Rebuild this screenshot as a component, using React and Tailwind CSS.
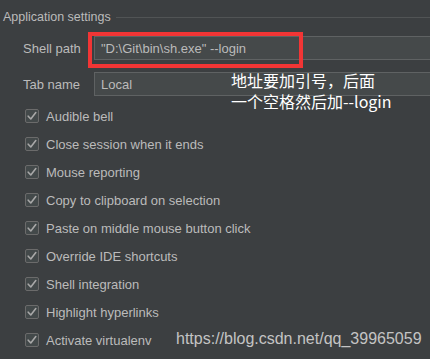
import React from 'react';

const options = [
  'Audible bell',
  'Close session when it ends',
  'Mouse reporting',
  'Copy to clipboard on selection',
  'Paste on middle mouse button click',
  'Override IDE shortcuts',
  'Shell integration',
  'Highlight hyperlinks',
  'Activate virtualenv',
];

function CheckBox() {
  return (
    <span className="flex items-center justify-center w-[14px] h-[14px] border border-[#6b6b6b] bg-[#43494a] rounded-[2px] shrink-0">
      <svg width="12" height="12" viewBox="0 0 12 12" fill="none">
        <path d="M2.2 6.2 L4.8 9 L9.8 2.6" stroke="#a8a8a8" strokeWidth="1.6" strokeLinecap="round" strokeLinejoin="round" />
      </svg>
    </span>
  );
}

function Field({ label, value }) {
  return (
    <div className="flex items-center h-[24px] pl-[23px]">
      <span className="w-[71px] shrink-0">{label}</span>
      <div className="flex items-center h-[24px] w-[360px] shrink-0 pl-[6px] bg-[#45494a] border border-[#5f6263]">
        {value}
      </div>
    </div>
  );
}

export default function App() {
  return (
    <div className="relative w-[430px] h-[359px] overflow-hidden bg-[#3c3f41] text-[13px] leading-[17px] text-[#bbbbbb] font-['Liberation_Sans',sans-serif]">
      {/* section header */}
      <div className="flex items-center h-[34px] pl-[3px]">
        <span className="text-[12.5px]">Application settings</span>
        <div className="flex-1 h-px bg-[#515455] ml-[5px]" />
      </div>

      <div className="mt-[2px]">
        <Field label="Shell path" value={'"D:\\Git\\bin\\sh.exe" --login'} />
      </div>
      <div className="mt-[12px]">
        <Field label="Tab name" value="Local" />
      </div>

      <div className="mt-[6px] flex flex-col">
        {options.map((o) => (
          <div key={o} className="flex items-center h-[28px] pl-[25px] gap-[7px]">
            <CheckBox />
            <span>{o}</span>
          </div>
        ))}
      </div>

      {/* annotation */}
      <div className="absolute left-[88px] top-[32px] w-[215px] h-[36px] border-4 border-[#f23535]" />
      <div className="absolute left-[231px] top-[70px] text-white text-[16px] leading-[21px] font-['Noto_Sans_CJK_SC',sans-serif]">
        <div>地址要加引号，后面</div>
        <div>一个空格然后加--login</div>
      </div>
      <div className="absolute left-[176px] top-[329px] text-[16px] leading-[20px] text-[#c4c4c4]">
        https://blog.csdn.net/qq_39965059
      </div>
    </div>
  );
}
